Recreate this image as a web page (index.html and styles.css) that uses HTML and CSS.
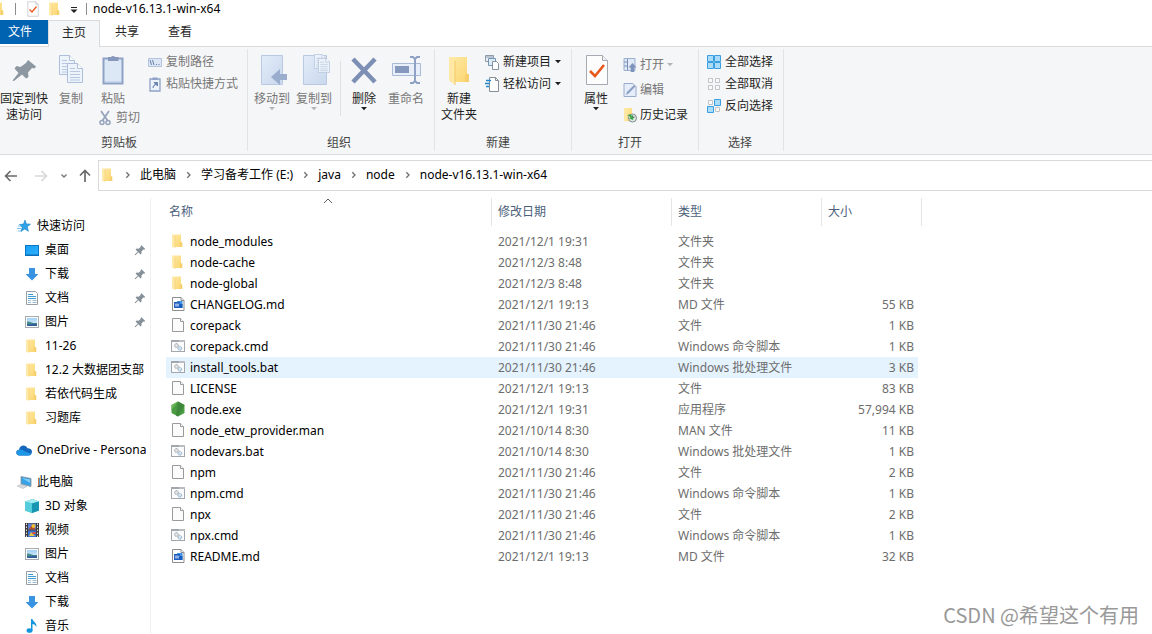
FILE: index.html
```html
<!DOCTYPE html>
<html lang="zh-CN">
<head>
<meta charset="utf-8">
<title>node-v16.13.1-win-x64</title>
<link rel="stylesheet" href="styles.css">
</head>
<body>
<svg class="defs" width="0" height="0" aria-hidden="true">
  <defs>
    <linearGradient id="gFolder" x1="0" y1="0" x2="1" y2="1"><stop offset="0" stop-color="#ffe9a6"/><stop offset="1" stop-color="#fbd66f"/></linearGradient>
    <linearGradient id="gBlue" x1="0" y1="0" x2="1" y2="1"><stop offset="0" stop-color="#e3ecf8"/><stop offset="1" stop-color="#c9d8ee"/></linearGradient>
    <linearGradient id="gDesk" x1="0" y1="0" x2="1" y2="1"><stop offset="0" stop-color="#17a0f5"/><stop offset="1" stop-color="#2fb0ff"/></linearGradient>
    <linearGradient id="gSky" x1="0" y1="0" x2="0" y2="1"><stop offset="0" stop-color="#9fd0f5"/><stop offset="1" stop-color="#e6f4fc"/></linearGradient>
    <symbol id="folder" viewBox="0 0 16 16"><path d="M2.500 1.500H11v7l1 1.500v4H2.500z" fill="url(#gFolder)"/><path d="M2 1.500l3 1.500v12l-3-1.500z" fill="#ffe9a8"/><path d="M5 3v11.500" stroke="#f4cf72" stroke-width=".7"/><path d="M10 9.500h2.300V14H10z" fill="#f5cf6c"/></symbol>
    <symbol id="word" viewBox="0 0 16 16"><path d="M2.500 1.500h8.500l3 3v10H2.500z" fill="#fff" stroke="#8d8d8d"/><path d="M11 1.500v3h3" fill="#eee" stroke="#8d8d8d"/><path d="M7 5h5.500v7H7z" fill="#3f95e5"/><path d="M8 8h4.500v4H8z" fill="#185abd"/><rect x="4" y="6" width="6" height="6" fill="#1b5cbe"/><path d="M5 7.500l1 3 1-3 1 3 1-3" fill="none" stroke="#dbe8fa" stroke-width=".7"/></symbol>
    <symbol id="file" viewBox="0 0 16 16"><path d="M2.500 1.500h8l3 3v10h-11z" fill="#fbfbfb" stroke="#9a9a9a"/><path d="M10.500 1.500v3h3" fill="#fff" stroke="#9a9a9a"/></symbol>
    <symbol id="script" viewBox="0 0 16 16"><rect x="1.500" y="2.500" width="13" height="11" fill="#fbfbfb" stroke="#a2a7ad"/><path d="M1 2h14v2H1z" fill="#a2a7ad"/><path d="M9.500 3h1M11.500 3h1M13.500 3h1" stroke="#fff"/><circle cx="6.500" cy="7.500" r="1.900" fill="#e2e4e7" stroke="#8f969e" stroke-dasharray="1 .5"/><circle cx="9.800" cy="10.300" r="1.900" fill="#cfe3f3" stroke="#8aa3b8" stroke-dasharray="1 .5"/></symbol>
    <symbol id="nodeexe" viewBox="0 0 16 16"><path d="M8 .5l6.500 3.600v7.800L8 15.500 1.500 11.900V4.100z" fill="#4a9c43"/><path d="M8 .5l6.500 3.600L8 15.500l-2-1.100z" fill="#3f873b"/><path d="M8 .5L1.500 4.100v5z" fill="#6cb65c"/></symbol>
    <symbol id="star" viewBox="0 0 16 16"><path d="M9 2l1.400 3.900 4.100.3-3.200 2.600 1.100 4.500L8.800 11 5 13.500l1.200-4.200L3.500 6.500l4-.4z" fill="#2da2e8" stroke="#1682c8" stroke-width=".6"/><path d="M2 8h3M1 10.500h4M2 13h3" stroke="#79c3f0" stroke-width="1"/></symbol>
    <symbol id="desktop" viewBox="0 0 16 16"><rect x="1.500" y="3.500" width="13" height="10" fill="url(#gDesk)" stroke="#0a76c4"/><path d="M2 13h12" stroke="#0a66ad"/></symbol>
    <symbol id="down" viewBox="0 0 16 16"><path d="M5 2h6v6h3.500L8 14.500 1.500 8H5z" fill="#3893e3"/></symbol>
    <symbol id="doc" viewBox="0 0 16 16"><path d="M2.500 1.500h9l2 2v11h-11z" fill="#fafcfd" stroke="#979ea4"/><path d="M4 4.500h5M4 6.500h8M4 8.500h8" stroke="#429bd3"/><path d="M4 10.500h3M4 12.500h3M8.500 10.500h4M8.500 12.500h4" stroke="#9dbed3"/></symbol>
    <symbol id="picture" viewBox="0 0 16 16"><rect x="1.500" y="2.500" width="13" height="11" fill="#fff" stroke="#a5aaaf"/><rect x="3" y="4" width="10" height="8" fill="url(#gSky)"/><path d="M3 7.500c3-.5 5 2 10 1.500v3H3z" fill="#4b8a87"/><path d="M3 10.500c4 0 6-1 10-.5v2H3z" fill="#315f9b"/></symbol>
    <symbol id="cloud" viewBox="0 0 16 16"><path d="M3.500 13.500C-.8 13-.8 8 3 7.700 4 3 9.500 2 11.500 6.300c3.500 0 5 2 4.300 4.500-.5 2-2 2.700-3.500 2.700z" fill="#1467bd"/><path d="M3 7.700C6 6.500 8 9 10 10l5.500 1.700c-.6 1.300-1.800 1.800-3.200 1.800H3.500C0 13-.5 8.500 3 7.700z" fill="#1f96e6"/></symbol>
    <symbol id="pc" viewBox="0 0 16 16"><path d="M5 2.500l10 2v8L5 10z" fill="#38a2e7" stroke="#89929a" stroke-width=".8"/><path d="M6 4l8 1.500v3.500z" fill="#80cdf7"/><path d="M1 12l4-1.500 6 2-4 2z" fill="#d8dce0" stroke="#aab0b5" stroke-width=".5"/></symbol>
    <symbol id="cube" viewBox="0 0 16 16"><path d="M1 3.500L8.500 1 15 3.500v9L8 15l-7-2.500z" fill="#24aec6"/><path d="M1 3.500L8.500 1 15 3.500 8 5.500z" fill="#a0eaf0"/><path d="M1 3.500l7 2V15l-7-2.500z" fill="#54cedd"/><path d="M8 5.500l7-2v9L8 15z" fill="#1796b3"/></symbol>
    <symbol id="video" viewBox="0 0 16 16"><path d="M1 1h14v14H1z" fill="#3d3d40"/><path d="M4 1.500h8v6H4z" fill="#5b7dd3"/><path d="M4 8.500h8V15H4z" fill="#3873d6"/><path d="M5 7l3-4 4 4.500H4z" fill="#b44d29"/><circle cx="9.500" cy="4" r="2" fill="#efbd2f"/><path d="M5 14l2-4 4 4z" fill="#e6c344"/><path d="M8.500 10h3v2h-3z" fill="#df4c34"/><path d="M2.500 1.500V15M13.500 1.500V15" stroke="#e3e3e3" stroke-dasharray="1.500 1.500"/></symbol>
    <symbol id="music" viewBox="0 0 16 16"><ellipse cx="5.500" cy="12.500" rx="3" ry="2.300" fill="#1595df"/><path d="M7 1h1.500c.3 3 4.500 3.200 4 8-1-2-2.500-3-4-3v6.500H7z" fill="#1595df"/></symbol>
    <symbol id="pin" viewBox="0 0 16 16"><path d="M10 1.500l5 5-1.300 1.200-1.300-.3-2.500 2.500.2 2.600-1.400 1.400-2.900-2.900L2 15l-1-1 4-3.800L2.200 7.400l1.400-1.300 2.800.2 2.600-2.600-.3-1z" fill="#858f99"/></symbol>
    <symbol id="check" viewBox="0 0 24 32"><path d="M1.500 1.500h16l5 5v24h-21z" fill="#fdfdfe" stroke="#a4a9b2"/><path d="M17.500 1.500v5h5" fill="#eef0f3" stroke="#a4a9b2"/><path d="M5 17l5 5 9-11" fill="none" stroke="#e8581c" stroke-width="2.600"/></symbol>
    <symbol id="chev" viewBox="0 0 8 8"><path d="M2.300 1.300L5 4 2.300 6.700" fill="none" stroke="#6e6e6e" stroke-width="1.300"/></symbol>
    <symbol id="tri" viewBox="0 0 6 4"><path d="M0 0h6L3 3.300z" fill="currentColor"/></symbol>
    <symbol id="page" viewBox="0 0 16 20"><path d="M.5.5h10l5 5v14H.5z" fill="#edf3fb" stroke="#aebfdb"/><path d="M10.500.5v5h5" fill="#fff" stroke="#aebfdb"/><path d="M3 5.500h5M3 8.500h10M3 11.500h10M3 14.500h10M3 17h10" stroke="#b8c8e0"/></symbol>
  </defs>
</svg>

<header class="titlebar">
  <svg class="i-edge"><use href="#folder"/></svg>
  <span class="bar-sep sep-a"></span>
  <svg class="i-props"><use href="#check"/></svg>
  <svg class="i16 i-qat"><use href="#folder"/></svg>
  <svg class="i-custom" viewBox="0 0 8 6"><path d="M1 .5h6" stroke="#222"/><path d="M.500 2.500h7L4 6z" fill="#222"/></svg>
  <span class="bar-sep"></span>
  <h1 class="title">node-v16.13.1-win-x64</h1>
</header>

<nav class="tabs" aria-label="功能区">
  <button class="tab tab-file">文件</button>
  <button class="tab tab-active">主页</button>
  <button class="tab">共享</button>
  <button class="tab">查看</button>
</nav>

<section class="ribbon">
  <div class="group group-clip">
    <div class="tools">
      <button class="big"><svg viewBox="0 0 32 32"><path d="M20 6l8 6.500-1.500 2-2.500-.5-4 4.500.5 4.500-2.500 1.500-4-4L6 27l-1.500-.5 6-7.500-4-4.500L8.500 12l4 1 5.500-4z" fill="#8c97a1"/></svg><span>固定到快<br>速访问</span></button>
      <button class="big w-copy off"><svg viewBox="0 0 32 32"><use href="#page" x="4" y="1" width="16" height="20"/><use href="#page" x="12" y="9" width="16" height="20"/></svg><span>复制</span></button>
      <div class="stack">
        <button class="big w-paste off"><svg viewBox="0 0 32 32"><path d="M6.500 4.500h19v25h-19z" fill="#dde8f7" stroke="#8fa1c5" stroke-width="2"/><path d="M11 3h3a2.500 2.500 0 014 0h3.500v4H11z" fill="#8798bc"/><path d="M24.500 8v20H8" fill="none" stroke="#b6c5df"/></svg><span>粘贴</span></button>
        <button class="small cut off"><svg viewBox="0 0 12 16"><path d="M2 1l6.500 9.500M10 1L3.500 10.500" stroke="#94a2bb" stroke-width="1.700"/><circle cx="3" cy="12.500" r="2" fill="none" stroke="#94a2bb" stroke-width="1.500"/><circle cx="9" cy="12.500" r="2" fill="none" stroke="#94a2bb" stroke-width="1.500"/></svg>剪切</button>
      </div>
      <div class="smalls">
        <button class="small off"><svg viewBox="0 0 14 16"><path d="M.5 4.500h13v8H.5z" fill="#dce7f6" stroke="#b4c3dc"/><path d="M2 6l1.500 5M4.500 6L6 11M8 10.500h1M10.500 10.500h1" stroke="#697fa7"/></svg>复制路径</button>
        <button class="small off"><svg viewBox="0 0 14 16"><path d="M2 3h10v12H2z" fill="#edf3fc" stroke="#8fa2c6" stroke-width="1.300"/><path d="M4.500 1.500h5v2.500h-5z" fill="#8fa2c6"/><path d="M5 12c0-2 1-3 3-4M6 6.500h3.500V10z" fill="#6c84b0" stroke="#6c84b0"/></svg>粘贴快捷方式</button>
      </div>
    </div>
    <div class="caption">剪贴板</div>
  </div>

  <div class="group group-org">
    <div class="tools">
      <button class="big w-org off"><svg viewBox="0 0 32 32"><path d="M5.500 1.500h21v29h-21z" fill="url(#gBlue)" stroke="#b9c9e2"/><path d="M31 20v6h-7v5l-9-8 9-8v5z" fill="#9badce"/></svg><span>移动到</span><svg class="tri"><use href="#tri"/></svg></button>
      <button class="big w-org off"><svg viewBox="0 0 32 32"><path d="M5.500 1.500h23v29h-23z" fill="url(#gBlue)" stroke="#b9c9e2"/><use href="#page" x="16" y="0" width="12" height="15"/><use href="#page" x="20" y="4" width="12" height="15"/></svg><span>复制到</span><svg class="tri"><use href="#tri"/></svg></button>
      <span class="tool-sep"></span>
      <button class="big w-org"><svg viewBox="0 0 32 32"><path d="M5 5l22 23M27 5L5 28" stroke="#7d8fb4" stroke-width="4.500"/></svg><span>删除</span><svg class="tri"><use href="#tri"/></svg></button>
      <button class="big w-org off"><svg viewBox="0 0 32 32"><path d="M2.500 9.500h28v12h-28z" fill="#e8effa" stroke="#a9bad7"/><path d="M5 12h14v7H5z" fill="#8599be"/><path d="M20 3h3l2 2 2-2h3M25 5v22M20 29h3l2-2 2 2h3" fill="none" stroke="#8fa2c5" stroke-width="2"/></svg><span>重命名</span></button>
    </div>
    <div class="caption">组织</div>
  </div>

  <div class="group group-new">
    <div class="tools">
      <button class="big"><svg viewBox="0 0 32 32"><path d="M7 3h17v16l2 2v7H7z" fill="url(#gFolder)"/><path d="M6 3l6 4v24l-6-5z" fill="#ffe8a5"/><path d="M12 7v24" stroke="#f1ca6a"/><path d="M22 20h4v8h-4z" fill="#f6cf6c"/></svg><span>新建<br>文件夹</span></button>
      <div class="smalls">
        <button class="small"><svg viewBox="0 0 14 16"><path d="M.5 1.500h8v6h-8z" fill="#e8eff7" stroke="#8d9bab"/><path d="M1 3h8" stroke="#8d9bab"/><path d="M3.500 4.500h7v7h-7z" fill="#dcecf9" stroke="#7895af"/><path d="M7.500 7.500h4l2 2v6h-6z" fill="#fff" stroke="#8593a1"/></svg>新建项目<svg class="tri"><use href="#tri"/></svg></button>
        <button class="small"><svg viewBox="0 0 14 16"><path d="M4.500 1.500h6l3 3v11h-9z" fill="#fff" stroke="#858f9a"/><path d="M10.500 1.500v3h3" fill="none" stroke="#858f9a"/><path d="M1 4.500h5M0 7.500h5M1 10.500h3" stroke="#2386cf" stroke-width="1.400"/></svg>轻松访问<svg class="tri"><use href="#tri"/></svg></button>
      </div>
    </div>
    <div class="caption">新建</div>
  </div>

  <div class="group group-open">
    <div class="tools">
      <button class="big"><svg viewBox="0 0 32 32"><use href="#check" x="5" y="0" width="24" height="32"/></svg><span>属性</span><svg class="tri"><use href="#tri"/></svg></button>
      <div class="smalls roomy">
        <button class="small off"><svg viewBox="0 0 14 16"><path d="M1 1.500h11v12H1z" fill="#dfe9f7" stroke="#9dafcf"/><path d="M4.500 2v11M1 5h3M1 9h3" stroke="#7b90b8"/><path d="M9.500 6l4 4.500h-2.200V15H7.700v-4.500H5.500z" fill="#7f94bc"/></svg>打开<svg class="tri"><use href="#tri"/></svg></button>
        <button class="small off"><svg viewBox="0 0 14 16"><path d="M1 1.500h9l3 3v10H1z" fill="#e4edf9" stroke="#9aaccb"/><path d="M3 13l1-3 7-7 1.500 1.500-7 7z" fill="#8b9fc4"/></svg>编辑</button>
        <button class="small"><svg viewBox="0 0 14 16"><path d="M1 1h8v7l1 2v4H1z" fill="url(#gFolder)"/><path d="M1 1l3 2v12l-3-2z" fill="#ffe8a5"/><circle cx="9.500" cy="11" r="4" fill="#e2e9e4" stroke="#7c8c84"/><path d="M9.500 8.500V11l2-1" fill="none" stroke="#53615a"/><path d="M4 9c3-3 5-1 5 1l1.500-1-.5 4-4-1.500L7.500 11C7 9 6 8.500 4 9z" fill="#35a745"/></svg>历史记录</button>
      </div>
    </div>
    <div class="caption">打开</div>
  </div>

  <div class="group group-select">
    <div class="tools">
      <div class="smalls">
        <button class="small"><svg viewBox="0 0 14 16"><path d="M.5 1.500h6v6h-6zM7.500 1.500h6v6h-6zM.5 8.500h6v6h-6zM7.500 8.500h6v6h-6z" fill="#a9dcfa" stroke="#3b9edf"/></svg>全部选择</button>
        <button class="small"><svg viewBox="0 0 14 16"><path d="M1.500 2.500h4v4h-4zM8.500 2.500h4v4h-4zM1.500 9.500h4v4h-4zM8.500 9.500h4v4h-4z" fill="#fafafa" stroke="#c2c4c8"/></svg>全部取消</button>
        <button class="small"><svg viewBox="0 0 14 16"><path d="M1.500 2.500h4v4h-4zM8.500 9.500h4v4h-4z" fill="#fafafa" stroke="#c2c4c8"/><path d="M7.500 1.500h6v6h-6zM.5 8.500h6v6h-6z" fill="#a9dcfa" stroke="#3b9edf"/></svg>反向选择</button>
      </div>
    </div>
    <div class="caption">选择</div>
  </div>
</section>

<div class="location">
  <button class="nav-btn" aria-label="后退"><svg viewBox="0 0 14 14"><path d="M13 7H1.500M6.500 2L1.500 7l5 5" fill="none" stroke="#6a6a6a" stroke-width="1.600"/></svg></button>
  <button class="nav-btn" aria-label="前进" disabled><svg viewBox="0 0 14 14"><path d="M1 7h11.500M7.500 2l5 5-5 5" fill="none" stroke="#d8d8d8" stroke-width="1.600"/></svg></button>
  <button class="nav-btn nav-recent" aria-label="最近位置"><svg viewBox="0 0 8 8"><path d="M1.500 2.500L4 5l2.500-2.500" fill="none" stroke="#777" stroke-width="1.400"/></svg></button>
  <button class="nav-btn nav-up" aria-label="上移"><svg viewBox="0 0 14 14"><path d="M7 13V1.500M2 6.500l5-5 5 5" fill="none" stroke="#6a6a6a" stroke-width="1.700"/></svg></button>
  <div class="address">
    <svg class="i16"><use href="#folder"/></svg>
    <svg class="crumb-sep"><use href="#chev"/></svg><a href="#">此电脑</a>
    <svg class="crumb-sep"><use href="#chev"/></svg><a href="#">学习备考工作 (E:)</a>
    <svg class="crumb-sep"><use href="#chev"/></svg><a href="#">java</a>
    <svg class="crumb-sep"><use href="#chev"/></svg><a href="#">node</a>
    <svg class="crumb-sep"><use href="#chev"/></svg><a href="#">node-v16.13.1-win-x64</a>
  </div>
</div>

<main class="content">
  <nav class="side" aria-label="导航窗格">
    <div class="side-group">
      <a class="side-item root" href="#"><svg class="i16"><use href="#star"/></svg><span>快速访问</span></a>
      <a class="side-item" href="#"><svg class="i16"><use href="#desktop"/></svg><span>桌面</span><svg class="pin"><use href="#pin"/></svg></a>
      <a class="side-item" href="#"><svg class="i16"><use href="#down"/></svg><span>下载</span><svg class="pin"><use href="#pin"/></svg></a>
      <a class="side-item" href="#"><svg class="i16"><use href="#doc"/></svg><span>文档</span><svg class="pin"><use href="#pin"/></svg></a>
      <a class="side-item" href="#"><svg class="i16"><use href="#picture"/></svg><span>图片</span><svg class="pin"><use href="#pin"/></svg></a>
      <a class="side-item" href="#"><svg class="i16"><use href="#folder"/></svg><span>11-26</span></a>
      <a class="side-item" href="#"><svg class="i16"><use href="#folder"/></svg><span>12.2 大数据团支部</span></a>
      <a class="side-item" href="#"><svg class="i16"><use href="#folder"/></svg><span>若依代码生成</span></a>
      <a class="side-item" href="#"><svg class="i16"><use href="#folder"/></svg><span>习题库</span></a>
    </div>
    <div class="side-group">
      <a class="side-item root" href="#"><svg class="i16"><use href="#cloud"/></svg><span>OneDrive - Persona</span></a>
    </div>
    <div class="side-group">
      <a class="side-item root" href="#"><svg class="i16"><use href="#pc"/></svg><span>此电脑</span></a>
      <a class="side-item" href="#"><svg class="i16"><use href="#cube"/></svg><span>3D 对象</span></a>
      <a class="side-item" href="#"><svg class="i16"><use href="#video"/></svg><span>视频</span></a>
      <a class="side-item" href="#"><svg class="i16"><use href="#picture"/></svg><span>图片</span></a>
      <a class="side-item" href="#"><svg class="i16"><use href="#doc"/></svg><span>文档</span></a>
      <a class="side-item" href="#"><svg class="i16"><use href="#down"/></svg><span>下载</span></a>
      <a class="side-item" href="#"><svg class="i16"><use href="#music"/></svg><span>音乐</span></a>
    </div>
  </nav>

  <div class="files">
    <table class="list">
      <colgroup><col class="c-name"><col class="c-date"><col class="c-type"><col class="c-size"></colgroup>
      <thead><tr><th class="sorted"><svg class="sort" viewBox="0 0 10 6"><path d="M1 5l4-4 4 4" fill="none" stroke="#5c5c5c"/></svg>名称</th><th>修改日期</th><th>类型</th><th>大小</th></tr></thead>
      <tbody>
        <tr><td><svg class="i16"><use href="#folder"/></svg>node_modules</td><td>2021/12/1 19:31</td><td>文件夹</td><td></td></tr>
        <tr><td><svg class="i16"><use href="#folder"/></svg>node-cache</td><td>2021/12/3 8:48</td><td>文件夹</td><td></td></tr>
        <tr><td><svg class="i16"><use href="#folder"/></svg>node-global</td><td>2021/12/3 8:48</td><td>文件夹</td><td></td></tr>
        <tr><td><svg class="i16"><use href="#word"/></svg>CHANGELOG.md</td><td>2021/12/1 19:13</td><td>MD 文件</td><td>55 KB</td></tr>
        <tr><td><svg class="i16"><use href="#file"/></svg>corepack</td><td>2021/11/30 21:46</td><td>文件</td><td>1 KB</td></tr>
        <tr><td><svg class="i16"><use href="#script"/></svg>corepack.cmd</td><td>2021/11/30 21:46</td><td>Windows 命令脚本</td><td>1 KB</td></tr>
        <tr class="hover"><td><svg class="i16"><use href="#script"/></svg>install_tools.bat</td><td>2021/11/30 21:46</td><td>Windows 批处理文件</td><td>3 KB</td></tr>
        <tr><td><svg class="i16"><use href="#file"/></svg>LICENSE</td><td>2021/12/1 19:13</td><td>文件</td><td>83 KB</td></tr>
        <tr><td><svg class="i16"><use href="#nodeexe"/></svg>node.exe</td><td>2021/12/1 19:31</td><td>应用程序</td><td>57,994 KB</td></tr>
        <tr><td><svg class="i16"><use href="#file"/></svg>node_etw_provider.man</td><td>2021/10/14 8:30</td><td>MAN 文件</td><td>11 KB</td></tr>
        <tr><td><svg class="i16"><use href="#script"/></svg>nodevars.bat</td><td>2021/10/14 8:30</td><td>Windows 批处理文件</td><td>1 KB</td></tr>
        <tr><td><svg class="i16"><use href="#file"/></svg>npm</td><td>2021/11/30 21:46</td><td>文件</td><td>2 KB</td></tr>
        <tr><td><svg class="i16"><use href="#script"/></svg>npm.cmd</td><td>2021/11/30 21:46</td><td>Windows 命令脚本</td><td>1 KB</td></tr>
        <tr><td><svg class="i16"><use href="#file"/></svg>npx</td><td>2021/11/30 21:46</td><td>文件</td><td>2 KB</td></tr>
        <tr><td><svg class="i16"><use href="#script"/></svg>npx.cmd</td><td>2021/11/30 21:46</td><td>Windows 命令脚本</td><td>1 KB</td></tr>
        <tr><td><svg class="i16"><use href="#word"/></svg>README.md</td><td>2021/12/1 19:13</td><td>MD 文件</td><td>32 KB</td></tr>
      </tbody>
    </table>
  </div>
</main>
<div class="watermark">CSDN @希望这个有用</div>
</body>
</html>
```
FILE: styles.css
```css
* { box-sizing: border-box; }

body {
  margin: 0;
  height: 100vh;
  display: flex;
  flex-direction: column;
  overflow: hidden;
  background: #fff;
  color: #000;
  font: 12px/16px "Noto Sans", "Noto Sans CJK SC", sans-serif;
}

button {
  font: inherit;
  color: inherit;
  background: none;
  border: 0;
  padding: 0;
  white-space: nowrap;
}

a { color: inherit; text-decoration: none; }
svg { display: block; flex: none; }
.defs { position: absolute; }
.i16 { width: 16px; height: 16px; }

/* Title bar */
.titlebar {
  flex: none;
  height: 20px;
  display: flex;
  align-items: center;
  padding-bottom: 3px;
}
.i-edge { width: 16px; height: 16px; margin-left: -9px; }
.bar-sep { width: 1px; height: 12px; background: #8c8c8c; }
.sep-a { margin: 0 11px 0 8px; }
.i-props { width: 12px; height: 16px; }
.i-qat { margin-left: 8px; }
.i-custom { width: 8px; height: 6px; margin: 3px 8px 0 7px; }
.title { margin: 0 0 0 6px; font-size: 12px; font-weight: 400; }

/* Ribbon tabs */
.tabs {
  flex: none;
  display: flex;
  height: 27px;
  border-bottom: 1px solid #dadbdc;
}
.tab { height: 24px; padding: 0 14px 0 15px; color: #262626; }
.tab-file { padding: 0 16px 0 8px; background: #0063b1; color: #fff; }
.tab-active {
  height: 27px;
  padding: 0 13px 3px;
  background: #f5f6f7;
  border: 1px solid #dadbdc;
  border-bottom: 0;
}

/* Ribbon */
.ribbon {
  flex: none;
  display: flex;
  padding: 2px 0 3px;
  background: #f5f6f7;
  border-bottom: 1px solid #dadbdc;
  color: #1e1e1e;
}
.group {
  display: flex;
  flex-direction: column;
  padding-top: 2px;
  border-right: 1px solid #e2e3e4;
}
.group-clip { padding-right: 9px; }
.group-org { padding: 2px 7px 0 3px; }
.group-new { padding-right: 10px; }
.group-open { padding-right: 10px; }
.group-select { padding: 2px 10px 0 8px; }
.tools { display: flex; height: 84px; }
.caption { text-align: center; color: #444; }

.big {
  display: flex;
  flex-direction: column;
  align-items: center;
  align-self: flex-start;
  width: 48px;
  padding-top: 3px;
  text-align: center;
}
.big > svg { width: 32px; height: 32px; }
.big > span { margin-top: 5px; }
.w-copy { width: 46px; }
.w-paste { width: 38px; }
.w-org { width: 42px; }
.tool-sep { width: 1px; height: 55px; margin: 10px 2px 0 5px; background: #e0e1e3; }
.stack { display: flex; flex-direction: column; padding-right: 8px; }

.smalls { display: flex; flex-direction: column; }
.group-new .smalls { padding-left: 2px; }
.small { display: flex; align-items: center; gap: 4px; height: 22px; }
.small > svg { width: 14px; height: 16px; }
.roomy { padding: 1px 0 0 3px; }
.roomy .small { height: 25px; gap: 3px; }
.cut { height: 16px; margin-top: 3px; padding-left: 4px; }
.off { color: #777; }
.big > .tri, .small > .tri { width: 6px; height: 4px; }
.off .tri { color: #b5b5b5; }

/* Address row */
.location {
  flex: none;
  display: flex;
  align-items: center;
  padding: 5px 0 7px 4px;
}
.nav-btn { width: 14px; margin-right: 16px; }
.nav-btn svg { width: 14px; height: 14px; }
.nav-recent { width: 8px; margin: 0 10px 0 -4px; }
.nav-recent svg { width: 8px; height: 8px; }
.nav-up { margin-right: 6px; }
.address {
  flex: 1;
  display: flex;
  align-items: center;
  height: 31px;
  padding: 0 0 2px 1px;
  border: 1px solid #d9d9d9;
  border-right: 0;
}
.address .i16 { margin-right: -1px; }
.crumb-sep { width: 8px; height: 8px; margin: 0 8px 0 9px; }

/* Body */
.content { flex: 1; display: flex; min-height: 0; }
.side {
  width: 151px;
  flex: none;
  padding-top: 16px;
  border-right: 1px solid #f0f0f0;
  overflow: hidden;
}
.side-group { margin-bottom: 8px; }
.side-item {
  display: flex;
  align-items: center;
  gap: 5px;
  height: 24px;
  padding: 0 4px 0 24px;
  white-space: nowrap;
}
.side-item.root { padding: 0 2px 0 16px; }
.side-item span { flex: 1; min-width: 0; overflow: hidden; }
.pin { width: 12px; height: 12px; }

.files { flex: 1; min-width: 0; padding-left: 15px; overflow: hidden; }
.list { table-layout: fixed; width: 756px; border-spacing: 0; }
.c-name { width: 326px; }
.c-date { width: 180px; }
.c-type { width: 150px; }
.c-size { width: 100px; }
.list th {
  height: 28px;
  padding: 0 0 0 6px;
  border-right: 1px solid #e5e5e5;
  text-align: left;
  font-weight: 400;
  color: #4c607a;
}
.list th.sorted { position: relative; padding-left: 3px; }
.sort { position: absolute; top: 0; left: calc(50% - 6px); width: 10px; height: 6px; }
.list tbody::before { content: ""; display: block; height: 5px; }
.list td {
  height: 21px;
  padding: 0 6px;
  line-height: 21px;
  color: #6d6d6d;
  white-space: nowrap;
}
.list td:first-child { padding-left: 4px; color: #000; }
.list td svg { display: inline-block; margin-right: 4px; vertical-align: -3px; }
.list td:last-child {
  padding-right: 4px;
  border-right: 4px solid transparent;
  background-clip: padding-box;
  text-align: right;
}
.hover td { background-color: #e5f3ff; }

.watermark {
  position: absolute;
  right: 13px;
  bottom: 5px;
  font: 20px/28px "Noto Sans CJK SC", sans-serif;
  color: #999;
}
```
